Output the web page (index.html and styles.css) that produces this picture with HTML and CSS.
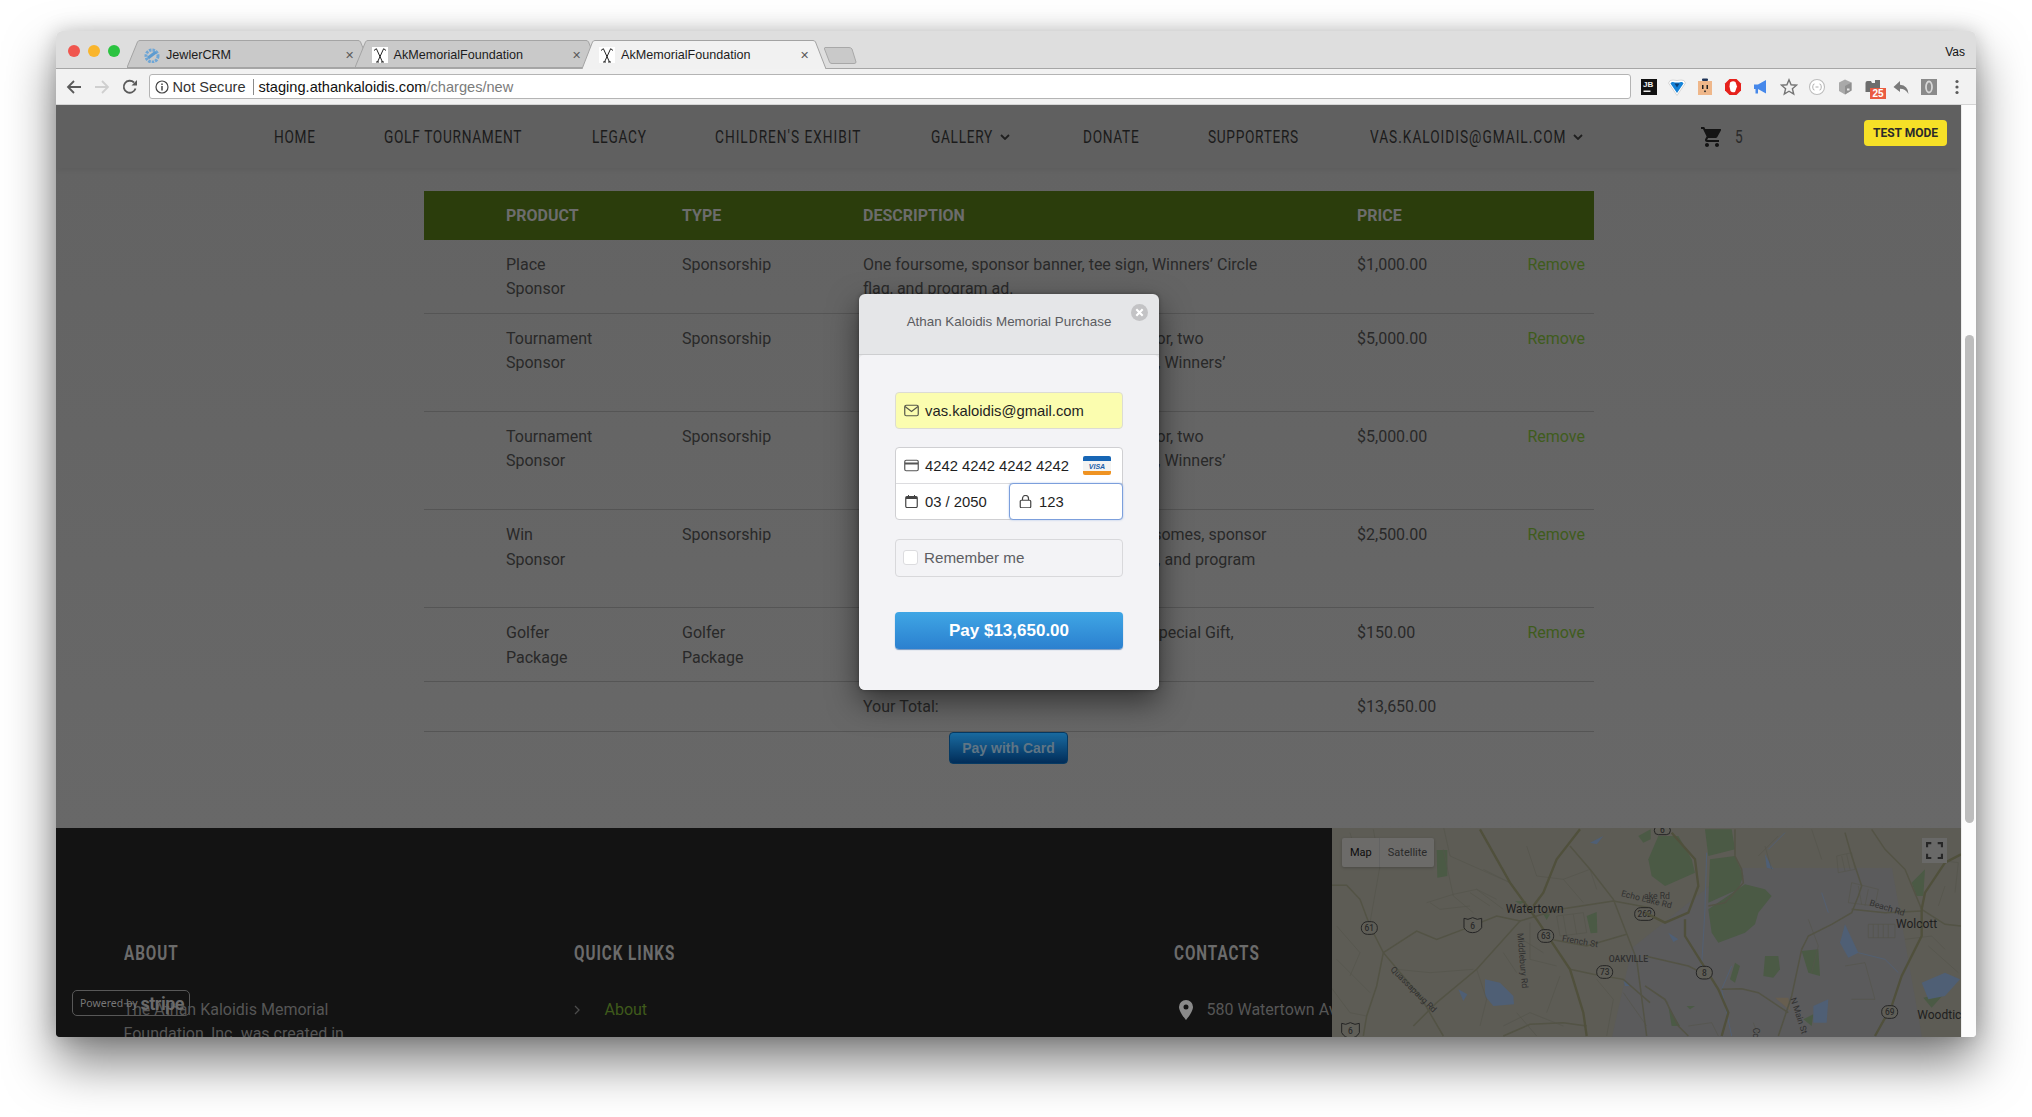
FILE: index.html
```html
<!DOCTYPE html>
<html lang="en">
<head>
<meta charset="utf-8">
<title>AkMemorialFoundation</title>
<link rel="stylesheet" href="styles.css">
</head>
<body>
<div class="window">
  <div class="titlebar">
    <div class="lights"><span class="light red"></span><span class="light yellow"></span><span class="light green"></span></div>
    <div class="tabs">
      <div class="tab">
        <svg class="tab-shape" viewBox="0 0 244 29" preserveAspectRatio="none"><path class="tab-bg" d="M0 28.5 L10.5 2 Q11.3 .5 13 .5 H231 Q232.7 .5 233.5 2 L244 28.5 Z"/></svg>
        <svg class="favicon" viewBox="0 0 16 16"><circle cx="8" cy="9" r="6" fill="none" stroke="#6ea6d6" stroke-width="3" stroke-dasharray="2.5 1"/><path d="M4 11 L12 5" stroke="#5d9bd0" stroke-width="3"/></svg>
        <span class="tab-title">JewlerCRM</span><span class="tab-x">✕</span>
      </div>
      <div class="tab">
        <svg class="tab-shape" viewBox="0 0 244 29" preserveAspectRatio="none"><path class="tab-bg" d="M0 28.5 L10.5 2 Q11.3 .5 13 .5 H231 Q232.7 .5 233.5 2 L244 28.5 Z"/></svg>
        <svg class="favicon" viewBox="0 0 16 16"><rect width="16" height="16" fill="#fff"/><path d="M4.500 2 L10.500 15 M11.500 2 L5.500 15 M2 3.500 L4.500 1.500 M14 3.500 L11.500 1.500 M4 15 H7 M9 15 H12" stroke="#222" stroke-width="1" fill="none"/></svg>
        <span class="tab-title">AkMemorialFoundation</span><span class="tab-x">✕</span>
      </div>
      <div class="tab tab-active">
        <svg class="tab-shape" viewBox="0 0 244 29" preserveAspectRatio="none"><path class="tab-bg" d="M0 29 L10.5 2 Q11.3 .5 13 .5 H231 Q232.7 .5 233.5 2 L244 29"/></svg>
        <svg class="favicon" viewBox="0 0 16 16"><rect width="16" height="16" fill="#fff"/><path d="M4.500 2 L10.500 15 M11.500 2 L5.500 15 M2 3.500 L4.500 1.500 M14 3.500 L11.500 1.500 M4 15 H7 M9 15 H12" stroke="#222" stroke-width="1" fill="none"/></svg>
        <span class="tab-title">AkMemorialFoundation</span><span class="tab-x">✕</span>
      </div>
      <svg class="newtab" viewBox="0 0 33 17"><path d="M1 .5 H25 Q27 .5 28 2 L32 15 Q32 16.500 30 16.500 H8 Q6 16.500 5.500 15 L.5 2 Q.3 .5 1 .5 Z" fill="#c9c9c9" stroke="#a8a8a8"/></svg>
    </div>
    <span class="profile">Vas</span>
  </div>

  <div class="toolbar">
    <svg class="nav-arrow" viewBox="0 0 16 16"><path d="M15 8 H2 M8 2 L2 8 L8 14" fill="none" stroke="#5a5a5a" stroke-width="1.8"/></svg>
    <svg class="nav-arrow" viewBox="0 0 16 16"><path d="M1 8 H14 M8 2 L14 8 L8 14" fill="none" stroke="#cfcfcf" stroke-width="1.8"/></svg>
    <svg class="nav-arrow" viewBox="0 0 16 16"><path d="M13.500 9.500 A6 6 0 1 1 12 3.500" fill="none" stroke="#5a5a5a" stroke-width="1.800"/><path d="M9.500 6.500 H15 V1 Z" fill="#5a5a5a"/></svg>
    <div class="omnibox">
      <svg class="info" viewBox="0 0 14 14"><circle cx="7" cy="7" r="6" fill="none" stroke="#444" stroke-width="1.2"/><path d="M7 6 V10.500 M7 3.500 V5" stroke="#444" stroke-width="1.500"/></svg>
      <span class="not-secure">Not Secure</span>
      <span class="omni-sep"></span>
      <span class="url">staging.athankaloidis.com<span class="url-path">/charges/new</span></span>
    </div>
    <div class="extensions">
      <span class="ext"><svg viewBox="0 0 18 18"><rect x="1" y="1" width="16" height="16" fill="#111"/><rect x="3.500" y="12.500" width="7" height="1.500" fill="#eee"/></svg><b class="jb">JB</b></span>
      <span class="ext"><svg viewBox="0 0 18 18"><path d="M.5 5 Q1.500 1.500 5 2 Q9 3 13 2 Q16.500 1.500 17.500 5 L9 17.500 Z" fill="#fff" stroke="#d5d5d5"/><path d="M2.500 5.500 Q3 3.500 5 4 Q9 5 13 4 Q15 3.500 15.500 5.500 L9 15 Z" fill="#1583d8"/><path d="M6.500 5.500 H11.500 L9 9.500 Z" fill="#0b3f78"/></svg></span>
      <span class="ext"><svg viewBox="0 0 18 18"><rect x="2" y="3" width="14" height="14" fill="#efb78a"/><rect x="6" y="0.500" width="6" height="2.500" rx="1" fill="#1f3558"/><rect x="6" y="7" width="1.500" height="4" fill="#222"/><rect x="10.500" y="7" width="1.500" height="4" fill="#222"/><rect x="8.200" y="12.500" width="1.600" height="1.600" fill="#222"/></svg></span>
      <span class="ext"><svg viewBox="0 0 18 18"><path d="M5.500 1 H12.500 L17 5.500 V12.500 L12.500 17 H5.500 L1 12.500 V5.500 Z" fill="#e6211c"/><path d="M6 4.500 Q9 2.500 11.500 4 L13 8.500 L11 14 Q8 15 6.500 13 L5.500 8.500 Z" fill="#fff"/></svg></span>
      <span class="ext"><svg viewBox="0 0 18 18"><path d="M2 6.500 H6 L14 2 V15.500 L6 11 V15.500 H3.500 V11 H2 Z" fill="#4688ea"/></svg></span>
      <span class="ext"><svg viewBox="0 0 18 18"><path d="M9 1.800 L11.100 6.800 L16.500 7.200 L12.400 10.700 L13.700 16 L9 13.200 L4.300 16 L5.600 10.700 L1.500 7.200 L6.900 6.800 Z" fill="none" stroke="#757575" stroke-width="1.400"/></svg></span>
      <span class="ext"><svg viewBox="0 0 18 18"><circle cx="9" cy="9" r="7.500" fill="#fff" stroke="#bdbdbd" stroke-width="1.100"/><path d="M6.500 6 Q5 6 5 7.500 V8.200 L4.300 9 L5 9.800 V10.500 Q5 12 6.500 12 M11.500 6 Q13 6 13 7.500 V8.200 L13.700 9 L13 9.800 V10.500 Q13 12 11.500 12 M7.500 9 H10.500" fill="none" stroke="#999" stroke-width=".8"/></svg></span>
      <span class="ext"><svg viewBox="0 0 18 18"><path d="M9 1.500 L15.500 4.500 V12.500 L9 16.500 L3 13 V4.500 Z" fill="#a9a9a9"/><path d="M9 8 L15.500 4.500 V12.500 L9 16.500 Z" fill="#8f8f8f"/><rect x="11" y="10.500" width="2.500" height="2" fill="#e8e8e8"/></svg></span>
      <span class="ext ext-cal"><svg viewBox="0 0 18 18"><path d="M1.500 5 Q1.500 3 3.500 3 H7 L8 5 H11 V2 H16 V14 H1.500 Z" fill="#6d6d6d"/></svg><b class="cal-badge">25</b></span>
      <span class="ext"><svg viewBox="0 0 18 18"><path d="M8 3 L1.500 9 L8 14 V10.800 Q13.500 10.800 16.500 16 Q16 7.500 8 6.800 Z" fill="#7b7b7b"/></svg></span>
      <span class="ext"><svg viewBox="0 0 18 18"><rect x="1" y="1" width="16" height="16" fill="#8a8a8a"/><ellipse cx="9" cy="9" rx="3" ry="5.500" fill="none" stroke="#d7d7d7" stroke-width="1.800"/></svg></span>
      <span class="ext"><svg viewBox="0 0 18 18"><circle cx="9" cy="3.500" r="1.600" fill="#5b5b5b"/><circle cx="9" cy="9" r="1.600" fill="#5b5b5b"/><circle cx="9" cy="14.500" r="1.600" fill="#5b5b5b"/></svg></span>
    </div>
  </div>

  <div class="viewport">
    <div class="page">
      <header class="site-header">
        <nav class="site-nav">
          <a class="nav-link w-home"><span class="nav-t">HOME</span></a>
          <a class="nav-link w-golf"><span class="nav-t">GOLF TOURNAMENT</span></a>
          <a class="nav-link w-legacy"><span class="nav-t">LEGACY</span></a>
          <a class="nav-link w-child"><span class="nav-t">CHILDREN'S EXHIBIT</span></a>
          <a class="nav-link w-gallery"><span class="nav-t">GALLERY</span><svg class="chev" viewBox="0 0 10 6"><path d="M1 1 L5 5 L9 1" fill="none" stroke="#1f1f1f" stroke-width="1.800"/></svg></a>
          <a class="nav-link w-donate"><span class="nav-t">DONATE</span></a>
          <a class="nav-link w-supp"><span class="nav-t">SUPPORTERS</span></a>
          <a class="nav-link w-mail"><span class="nav-t">VAS.KALOIDIS@GMAIL.COM</span><svg class="chev" viewBox="0 0 10 6"><path d="M1 1 L5 5 L9 1" fill="none" stroke="#1f1f1f" stroke-width="1.800"/></svg></a>
          <a class="cart">
            <svg class="cart-icon" viewBox="0 0 24 24"><path d="M7 18c-1.100 0-2 .9-2 2s.9 2 2 2 2-.9 2-2-.9-2-2-2zM1 2v2h2l3.600 7.590-1.350 2.450c-.16.28-.25.61-.25.96 0 1.100.9 2 2 2h12v-2H7.420c-.14 0-.25-.11-.25-.25l.03-.12.9-1.630h7.450c.75 0 1.410-.41 1.750-1.030l3.580-6.490A1 1 0 0 0 20 4H5.210l-.94-2H1zm16 16c-1.100 0-2 .9-2 2s.9 2 2 2 2-.9 2-2-.9-2-2-2z" fill="#141414"/></svg>
            <span class="cart-count"><span class="nav-t">5</span></span>
          </a>
        </nav>
        <span class="test-mode">TEST MODE</span>
      </header>

      <main class="content">
        <table class="cart-table">
          <colgroup><col class="c1"><col class="c2"><col class="c3"><col class="c4"><col class="c5"></colgroup>
          <thead>
            <tr><th class="first">Product</th><th>Type</th><th>Description</th><th>Price</th><th></th></tr>
          </thead>
          <tbody>
            <tr><td class="first">Place<br>Sponsor</td><td>Sponsorship</td><td>One foursome, sponsor banner, tee sign, Winners’ Circle<br>flag, and program ad.</td><td>$1,000.00</td><td class="act"><a class="remove">Remove</a></td></tr>
            <tr><td class="first">Tournament<br>Sponsor</td><td>Sponsorship</td><td>Two foursomes, major tournament sponsor, two<br>large tournament banners, eight tee signs, Winners’<br>Circle flag, and program ad.</td><td>$5,000.00</td><td class="act"><a class="remove">Remove</a></td></tr>
            <tr><td class="first">Tournament<br>Sponsor</td><td>Sponsorship</td><td>Two foursomes, major tournament sponsor, two<br>large tournament banners, eight tee signs, Winners’<br>Circle flag, and program ad.</td><td>$5,000.00</td><td class="act"><a class="remove">Remove</a></td></tr>
            <tr><td class="first">Win<br>Sponsor</td><td>Sponsorship</td><td>Ten premier Winners’ Circle Sponsor foursomes, sponsor<br>sponsor banner, tee signs, Winners’ Circle, and program<br>ad.</td><td>$2,500.00</td><td class="act"><a class="remove">Remove</a></td></tr>
            <tr><td class="first">Golfer<br>Package</td><td>Golfer<br>Package</td><td>One golfer, golf cart, lunch, dinner, and a Special Gift,<br>plus tee prizes.</td><td>$150.00</td><td class="act"><a class="remove">Remove</a></td></tr>
            <tr><td class="first"></td><td></td><td>Your Total:</td><td>$13,650.00</td><td></td></tr>
          </tbody>
        </table>
        <div class="pay-row"><button class="pay-card">Pay with Card</button></div>
      </main>

      <footer class="site-footer">
        <div class="foot-col foot-about">
          <h4 class="foot-title">ABOUT</h4>
          <p class="foot-text">The Athan Kaloidis Memorial<br>Foundation, Inc. was created in</p>
        </div>
        <div class="foot-col foot-links">
          <h4 class="foot-title">QUICK LINKS</h4>
          <p class="foot-link"><svg class="foot-chev" viewBox="0 0 6 10"><path d="M1 1 L5 5 L1 9" fill="none" stroke="#4c4c4c" stroke-width="1.300"/></svg><a class="foot-green">About</a></p>
        </div>
        <div class="foot-col foot-contacts">
          <h4 class="foot-title">CONTACTS</h4>
          <p class="foot-addr"><svg class="pin" viewBox="0 0 14 20"><path fill-rule="evenodd" d="M7 0 A7 7 0 0 1 14 7 C14 12 7 20 7 20 C7 20 0 12 0 7 A7 7 0 0 1 7 0 Z M7 4.500 A2.500 2.500 0 1 0 7 9.500 A2.500 2.500 0 1 0 7 4.500 Z" fill="#8a8a8a"/></svg><span>580 Watertown Avenue</span></p>
        </div>
        <div class="map">
          <svg class="map-svg" viewBox="0 0 629 209" preserveAspectRatio="none">
            <rect width="629" height="209" fill="#5d5c55"/>
            <path d="M400 40 H560 L590 209 H280 L300 120 Z" fill="#5b5b5c"/>
            <g transform="translate(-2,-2) scale(.33333)">
              <g class="m-green">
                <path d="M320 72 H352 V150 L322 155 Z"/><path d="M770 270 L800 258 L802 320 L782 322 Z"/><path d="M925 30 L962 10 V40 L940 50 Z"/><path d="M555 225 H590 L570 235 Z"/><path d="M640 265 H660 L650 282 Z"/>
              </g>
              <g class="m-water">
                <path d="M465 460 L510 470 L550 510 L552 535 L490 540 L465 510 Z"/><path d="M385 490 L412 505 L400 525 Z"/><path d="M780 50 L820 30 L800 55 Z"/><path d="M880 460 L905 480 L885 480 Z"/>
              </g>
              <g class="m-thin">
                <path d="M340 70 L370 210 L430 260 M290 230 L370 205 L440 190 L520 250 M420 200 L480 240 M440 190 L500 220 M300 230 L330 250 L420 240"/>
                <path d="M130 10 L150 120 L120 290 M60 20 L90 120 M20 300 L90 380 L60 450 M20 400 L120 500 M200 430 L300 440 L430 430 M0 480 L60 560 L110 570"/>
                <path d="M340 0 L360 90 L540 170 M460 130 L540 170 M590 60 L620 150 L700 160 L780 130 L800 190 M700 160 L760 230 M520 380 L560 440 M440 430 L470 520 L450 600 M520 600 L600 560 L700 600 M560 560 L620 630"/>
                <path d="M680 270 L760 260 L770 320 L690 330 Z M700 270 L710 330 M730 265 L740 325 M600 290 L600 400 L680 420 M560 330 L640 380 M800 460 L850 520 L830 630 M880 500 L950 600 M690 450 L650 560"/>
              </g>
              <g class="m-road">
                <path d="M0 178 H50 L90 220 L120 300 L160 380 L270 510 L340 630"/>
                <path d="M160 380 L260 315 L320 340 L400 310 L500 270 L570 285 L620 270 L690 250 L850 225 L960 245"/>
                <path d="M160 380 L140 480 L110 570 L100 630"/>
                <path d="M570 285 L440 430 L320 530 L250 600"/>
                <path d="M720 430 L790 445 L880 460 L960 530"/>
                <path d="M660 340 L770 360 L890 325"/>
                <path d="M720 60 L780 130 L850 220 L920 400 L950 630"/>
                <path d="M520 630 L600 595 L700 590 L770 600"/>
              </g>
              <g class="m-main">
                <path d="M450 10 L540 170 L620 280 L720 430 L760 560 L770 630"/>
                <path d="M750 10 L680 100 L640 200 L610 240"/>
              </g>
              <text class="m-city" x="527" y="260" font-size="36">Watertown</text>
              <text class="m-label" x="695" y="345" font-size="26" transform="rotate(10 695 345)">French St</text>
              <text class="m-label m-up" x="836" y="408" font-size="26">OAKVILLE</text>
              <text class="m-label" x="872" y="210" font-size="26" transform="rotate(14 872 210)">Echo Lake Rd</text>
              <text class="m-label" x="562" y="322" font-size="26" transform="rotate(85 562 322)">Middlebury Rd</text>
              <text class="m-label" x="180" y="432" font-size="26" transform="rotate(45 180 432)">Quassapaug Rd</text>
              <g class="m-shield"><rect x="94" y="287" width="48" height="38" rx="18"/><text x="118" y="315">61</text></g>
              <g class="m-shield"><path d="M402 277 L414 280 L428 275 L442 280 L455 277 L455 305 Q445 320 428 320 Q410 320 402 305 Z"/><text x="428" y="309">6</text></g>
              <g class="m-shield"><rect x="623" y="311" width="48" height="38" rx="18"/><text x="647" y="339">63</text></g>
              <g class="m-shield"><rect x="800" y="419" width="48" height="38" rx="18"/><text x="824" y="447">73</text></g>
              <g class="m-shield"><rect x="914" y="245" width="60" height="38" rx="18"/><text x="944" y="273">262</text></g>
              <g class="m-shield"><path d="M35 592 L47 595 L61 590 L75 595 L88 592 L88 620 Q80 636 61 636 Q44 636 35 620 Z"/><text x="61" y="624">6</text></g>
            </g>
            <g transform="translate(313,-2) scale(.33333)">
              <g class="m-green">
                <path d="M40 30 H100 L140 100 L150 140 L60 180 L20 150 L10 100 Z"/><path d="M180 10 H260 L270 70 L190 90 Z"/><path d="M195 100 L270 90 L295 150 L280 190 L190 230 Z"/>
                <path d="M190 250 L300 175 L360 190 L380 210 L340 260 L330 295 L300 320 L220 350 L200 320 Z"/><path d="M360 390 H400 L405 430 L385 455 L355 450 Z"/><path d="M470 375 L520 370 L525 450 L490 440 Z"/><path d="M800 170 L840 130 L835 210 L815 210 Z"/>
                <path d="M270 410 L285 420 L270 470 L255 460 Z"/><path d="M70 540 L105 600 L80 600 Z"/><path d="M125 540 H150 L135 550 Z"/><path d="M475 580 L505 565 L500 600 Z"/><path d="M835 515 L900 500 L860 545 Z"/>
              </g>
              <path d="M390 515 H430 L437 555 Z" fill="#675e4f"/>
              <g class="m-water">
                <path d="M600 295 L640 380 L610 395 L585 350 Z"/><path d="M830 470 L900 440 L945 460 L900 510 L850 520 Z"/><path d="M505 540 L550 520 L545 590 L505 590 Z"/><path d="M70 320 L100 340 L85 348 Z"/><path d="M360 85 L385 130 L365 125 Z"/>
              </g>
              <g class="m-thin">
                <path d="M575 90 L620 80 L630 130 L580 140 Z M590 90 L600 135 M605 85 L615 130 M620 170 L700 190 L690 240 L610 230 Z M640 180 L650 235 M670 190 L660 240"/>
                <path d="M670 295 H750 V335 H670 Z M685 295 V335 M700 295 V335 M715 295 V335 M730 295 V335 M780 340 L860 330 L900 370 M600 420 L660 410 L690 520 L620 520 M850 360 L940 440 M340 90 L400 30 M360 60 L380 130 M490 280 L520 360 L500 440 M500 10 L530 100"/>
                <path d="M325 590 L340 630 M130 600 L200 590 L220 630 M0 480 L70 530 M860 100 L940 110 L930 200 M880 240 L900 180"/>
              </g>
              <path class="m-thin-blue" d="M185 80 L180 250 L170 420 M370 70 L420 20 M530 200 L550 260 M640 380 L720 400 L760 440 M260 420 L230 490 L260 630"/>
              <g class="m-road">
                <path d="M190 240 L240 230 L295 170 L290 130 L270 90 L270 10"/>
                <path d="M230 490 L290 488 L340 500 L430 560"/>
                <path d="M470 370 L440 510 L400 630"/>
                <path d="M470 370 L490 330 L560 295 L620 260 L640 210 L650 180 L620 90 L600 20"/>
                <path d="M830 250 L900 295 L948 300"/>
                <path d="M620 250 L720 260 L830 255"/>
                <path d="M0 480 L60 520 L100 600 L130 630"/>
                <path d="M830 250 L780 130 L720 70 L680 10"/>
                <path d="M0 390 L130 420 L170 440"/>
              </g>
              <g class="m-main">
                <path d="M80 20 L150 100 L160 180 L130 260 L60 290 L0 260"/>
                <path d="M120 280 L120 330 L170 410 L220 490 L250 560 L230 630"/>
                <path d="M830 250 L830 330 L770 450 L740 540 L690 630"/>
                <path d="M830 250 L840 200 L900 110 L948 85"/>
              </g>
              <text class="m-label" x="-3" y="218" font-size="26">ake Rd</text>
              <text class="m-label" x="672" y="238" font-size="26" transform="rotate(17 672 238)">Beach Rd</text>
              <text class="m-label" x="436" y="518" font-size="26" transform="rotate(72 436 518)">N Main St</text>
              <text class="m-label" x="325" y="605" font-size="26" transform="rotate(90 325 605)">Co</text>
              <text class="m-city" x="753" y="305" font-size="36">Wolcott</text>
              <text class="m-city" x="817" y="578" font-size="36">Woodtic</text>
              <g class="m-shield"><rect x="154" y="421" width="48" height="38" rx="18"/><text x="178" y="449">8</text></g>
              <g class="m-shield"><rect x="710" y="539" width="48" height="38" rx="18"/><text x="734" y="567">69</text></g>
              <g class="m-shield"><rect x="28" y="0" width="48" height="26" rx="12"/><text x="52" y="20">6</text></g>
            </g>
          </svg>
          <div class="map-type"><span class="map-btn map-on">Map</span><span class="map-btn">Satellite</span></div>
          <div class="map-full"><svg viewBox="0 0 16 16"><path d="M1 5 V1 H5 M11 1 H15 V5 M15 11 V15 H11 M5 15 H1 V11" fill="none" stroke="#262626" stroke-width="2"/></svg></div>
        </div>
      </footer>

      <div class="stripe-badge"><span class="powered">Powered by</span><b class="stripe-word">stripe</b></div>

      <div class="modal">
        <div class="modal-head">
          <span class="modal-title">Athan Kaloidis Memorial Purchase</span>
          <span class="modal-close"><svg viewBox="0 0 16 16"><circle cx="8" cy="8" r="8" fill="#c3c3c5"/><path d="M5 5 L11 11 M11 5 L5 11" stroke="#fff" stroke-width="2"/></svg></span>
        </div>
        <div class="modal-body">
          <div class="field field-email">
            <svg class="f-icon" viewBox="0 0 15 13"><rect x=".75" y="1.250" width="13.500" height="10.500" rx="1.500" fill="none" stroke="#55574a" stroke-width="1.200"/><path d="M1 2.500 L7.500 7.500 L14 2.500" fill="none" stroke="#55574a" stroke-width="1.200"/></svg>
            <span class="f-val">vas.kaloidis@gmail.com</span>
          </div>
          <div class="field-group">
            <div class="field-line">
              <svg class="f-icon" viewBox="0 0 15 13"><rect x=".75" y="1.250" width="13.500" height="10.500" rx="1.500" fill="none" stroke="#555" stroke-width="1.200"/><rect x="1" y="3.500" width="13" height="2" fill="#555"/></svg>
              <span class="f-val">4242 4242 4242 4242</span>
              <svg class="visa" viewBox="0 0 28 19"><rect width="28" height="19" rx="2" fill="#fff"/><path d="M0 5 V2 Q0 0 2 0 H26 Q28 0 28 2 V5 Z" fill="#1766b5"/><path d="M0 15 H28 V17 Q28 19 26 19 H2 Q0 19 0 17 Z" fill="#ef9322"/><rect y="5" width="28" height="10" fill="#f4f4f2"/><text class="visa-t" x="14" y="13.200">VISA</text></svg>
            </div>
            <div class="field-row">
              <div class="field-cell">
                <svg class="f-icon" viewBox="0 0 15 13"><rect x="1.750" y="1.500" width="11.500" height="11" rx="1.200" fill="none" stroke="#444" stroke-width="1.200"/><rect x="2" y="2" width="11" height="2" fill="#444"/><path d="M4.500 0 V2 M10.500 0 V2" stroke="#444"/></svg>
                <span class="f-val">03 / 2050</span>
              </div>
              <div class="field-cell field-focus">
                <svg class="f-icon" viewBox="0 0 15 13"><rect x="2.250" y="5.250" width="10.500" height="7.500" rx="1.200" fill="none" stroke="#444" stroke-width="1.200"/><path d="M4.500 5 V3.500 A3 3 0 0 1 10.500 3.500 V5" fill="none" stroke="#444" stroke-width="1.200"/></svg>
                <span class="f-val">123</span>
              </div>
            </div>
          </div>
          <div class="remember"><span class="check"></span><span class="remember-t">Remember me</span></div>
          <button class="pay-btn">Pay $13,650.00</button>
        </div>
      </div>
    </div>
    <div class="scrollbar"><span class="thumb"></span></div>
  </div>
</div>
</body>
</html>
```
FILE: styles.css
```css
* { box-sizing: border-box; }
html, body { margin: 0; height: 1117px; overflow: hidden; background: #fff; }
body { padding: 31px 56px 80px; font-family: "Liberation Sans", Arial, sans-serif; }

.window { width: 1920px; height: 1006px; display: flex; flex-direction: column; border-radius: 6px 6px 4px 4px; box-shadow: 0 26px 50px 0 rgba(0,0,0,.5), 0 0 20px rgba(0,0,0,.18); overflow: hidden; background: #fff; }

/* browser chrome */
.titlebar { height: 38px; flex: none; display: flex; position: relative; background: #dedede; border-bottom: 1px solid #a6a6a6; }
.lights { display: flex; gap: 8px; padding: 14px 0 0 12px; width: 71px; flex: none; }
.light { width: 12px; height: 12px; border-radius: 50%; }
.red { background: #f0564f; }
.yellow { background: #f9b52c; }
.green { background: #2bc340; }
.tabs { display: flex; padding-top: 9px; height: 38px; flex: 1; }
.tab { width: 244px; height: 28px; margin-right: -16.500px; position: relative; display: flex; align-items: center; padding: 2px 0 0 17px; font-size: 12.600px; color: #1c1c1c; flex: none; }
.tab-shape { position: absolute; inset: 0; width: 100%; height: 100%; }
.tab-bg { fill: #c9c9c9; stroke: #a3a3a3; stroke-width: 1; vector-effect: non-scaling-stroke; }
.tab-active { height: 29px; z-index: 2; padding-top: 1px; }
.tab-active .tab-bg { fill: #f1f1f1; }
.favicon { width: 16px; height: 16px; position: relative; flex: none; }
.tab-title { position: relative; margin-left: 6px; flex: 1; white-space: nowrap; }
.tab-x { position: relative; width: 12px; margin-right: 16px; font-size: 11px; color: #5a5a5a; text-align: center; }
.newtab { width: 33px; height: 17px; margin: 7px 0 0 14px; flex: none; }
.profile { position: absolute; right: 11px; top: 14px; font-size: 12px; color: #111; }

.toolbar { height: 36px; flex: none; display: flex; align-items: center; background: #f2f2f2; padding: 0 4px 0 10px; border-bottom: 1px solid #d4d4d4; }
.nav-arrow { width: 16px; height: 16px; margin-right: 12px; flex: none; }
.omnibox { width: 1482px; height: 25px; margin-left: -1.500px; flex: none; background: #fff; border: 1px solid #b4b4b4; border-radius: 3px; display: flex; align-items: center; padding-left: 5px; font-size: 14.600px; color: #111; }
.info { width: 14px; height: 14px; flex: none; }
.not-secure { margin-left: 4px; color: #333; white-space: nowrap; }
.omni-sep { width: 1px; height: 16px; background: #8a8a8a; margin: 0 5px 0 7px; }
.url { white-space: nowrap; }
.url-path { color: #7b7b7b; }
.extensions { display: flex; margin-left: 4.500px; }
.ext { width: 28px; height: 28px; display: flex; align-items: center; justify-content: center; position: relative; flex: none; }
.ext svg { width: 18px; height: 18px; }
.jb { position: absolute; left: 8px; top: 7px; font-size: 8px; line-height: 9px; color: #eee; }
.cal-badge { position: absolute; left: 11px; top: 15px; width: 16px; height: 11px; background: #ea5c42; color: #fff; font-size: 10px; line-height: 11px; text-align: center; }

/* viewport */
.viewport { flex: 1; display: flex; min-height: 0; }
.page { flex: 1; min-width: 0; position: relative; overflow: hidden; display: flex; flex-direction: column; background: #646464; }
.scrollbar { width: 15px; flex: none; background: #fcfcfc; border-left: 1px solid #ececec; padding: 230px 0 0 3px; }
.thumb { display: block; width: 9px; height: 488px; border-radius: 5px; background: #bdbdbd; }

/* site header */
.site-header { height: 63px; flex: none; position: relative; background: #606060; box-shadow: 0 1px 6px rgba(0,0,0,.08); }
.site-nav { display: flex; align-items: center; height: 63px; padding: 0 0 0 218px; gap: 70px; }
.nav-link { position: relative; display: block; height: 24px; flex: none; color: #1b1b1b; white-space: nowrap; }
.nav-t { display: inline-block; font: 18px/24px "Roboto", sans-serif; letter-spacing: .9px; transform: scaleX(.76); transform-origin: left center; }
.w-child .nav-t, .w-mail .nav-t { letter-spacing: 1.300px; }
.w-home { width: 40px; }
.w-golf { width: 137.500px; }
.w-legacy { width: 53.500px; }
.w-child { width: 146px; }
.w-gallery { width: 81.500px; }
.w-donate { width: 55px; }
.w-supp { width: 92.500px; }
.w-mail { width: 213px; }
.chev { position: absolute; right: 0; top: 9px; width: 10px; height: 6px; }
.w-gallery .chev { right: 3px; }
.cart { display: flex; align-items: center; margin-left: 47px; }
.cart-icon { width: 24px; height: 24px; flex: none; }
.cart-count { margin-left: 11px; color: #2a2a2a; }
.test-mode { position: absolute; left: 1808px; top: 15px; width: 83px; height: 26px; border-radius: 4px; background: #f6e027; color: #2b2b2b; font: bold 12px/26px "Roboto", sans-serif; text-align: center; }

/* content */
.content { height: 660px; flex: none; padding: 23px 0 0 368px; background: linear-gradient(#636363, #686868); }
.cart-table { width: 1170px; table-layout: fixed; border-collapse: collapse; font: 16px/24.4px "Roboto", sans-serif; color: #292929; }
.c1 { width: 250px; }
.c2 { width: 181px; }
.c3 { width: 494px; }
.c4 { width: 170px; }
.cart-table th { height: 49px; padding: 2px 8px 0; background: #2b3d0c; color: #6c6c6c; font-weight: 700; text-align: left; text-transform: uppercase; }
.cart-table td { padding: 13px 8px 11px; vertical-align: top; border-bottom: 1px solid #555; }
.cart-table .first { padding-left: 82px; }
.cart-table .act { text-align: right; padding-right: 9px; }
.remove { color: #3f5c1c; }
.pay-row { width: 1169px; display: flex; justify-content: center; }
.pay-card { width: 119px; height: 32px; padding: 0; border: 1px solid #063a63; border-radius: 4px; background: linear-gradient(#1a6ba0, #012d59); color: #5f7585; font: bold 14px "Liberation Sans", sans-serif; }

/* footer */
.site-footer { flex: 1; min-height: 0; display: flex; background: #131313; overflow: hidden; }
.foot-col { flex: none; padding-top: 113px; }
.foot-about { width: 517.500px; padding-left: 67.500px; }
.foot-links { width: 600px; }
.foot-contacts { width: 158.500px; overflow: hidden; }
.foot-title { margin: 0; font: bold 21px/24px "Roboto", sans-serif; letter-spacing: 1.300px; color: #6b6b6b; white-space: nowrap; transform: scaleX(.725); transform-origin: left center; }
.foot-text { margin: 33px 0 0; font: 16px/24px "Roboto", sans-serif; color: #565656; white-space: nowrap; }
.foot-link { margin: 33px 0 0; display: flex; align-items: center; font: 16px/24px "Roboto", sans-serif; }
.foot-chev { width: 6px; height: 10px; margin-right: 25px; }
.foot-green { color: #3f5a1b; }
.foot-addr { margin: 33px 0 0; display: flex; align-items: center; font: 16px/24px "Roboto", sans-serif; color: #565656; white-space: nowrap; }
.pin { width: 14px; height: 20px; margin: 0 14px 0 5px; flex: none; }
.map { width: 629px; flex: none; position: relative; overflow: hidden; }
.map-svg { display: block; width: 629px; height: 209px; }
.m-green path { fill: #4b5a45; }
.m-water path { fill: #4f5f75; }
.m-thin path { fill: none; stroke: #54544b; stroke-width: 2; }
.m-thin-blue { fill: none; stroke: #525f72; stroke-width: 3; }
.m-road path { fill: none; stroke: #535345; stroke-width: 4.500; }
.m-main path { fill: none; stroke: #50503c; stroke-width: 7; }
.m-city { font-family: "Roboto", sans-serif; fill: #1e1e1e; }
.m-label { font-family: "Roboto", sans-serif; fill: #303030; }
.m-up { font-weight: 500; }
.m-shield rect, .m-shield path { fill: #5f5e57; stroke: #242424; stroke-width: 3; }
.m-shield text { font: 500 25px "Roboto", sans-serif; fill: #2a2a2a; text-anchor: middle; }
.map-type { position: absolute; left: 10px; top: 10px; height: 29px; display: flex; background: #6c6b69; border-radius: 2px; box-shadow: 0 1px 3px rgba(0,0,0,.2); font: 11px/29px "Roboto", sans-serif; color: #2a2a2a; }
.map-btn { padding: 0 7px 0 8px; }
.map-on { color: #0c0c0c; border-right: 1px solid #636363; }
.map-full { position: absolute; right: 14px; top: 10px; width: 25px; height: 25px; background: #696968; padding: 4px; }
.map-full svg { display: block; width: 17px; height: 17px; }

.stripe-badge { position: absolute; left: 16px; bottom: 21px; width: 118px; height: 26px; border: 1px solid #585858; border-radius: 5px; display: flex; align-items: center; padding-left: 7px; color: #787878; }
.powered { font: 10.500px "Noto Sans", sans-serif; white-space: nowrap; }
.stripe-word { margin-left: 3px; font: bold 18px "Roboto", sans-serif; letter-spacing: -.5px; color: #6a6a6a; }

/* modal */
.modal { position: absolute; left: 803px; top: 189px; width: 300px; height: 396px; border-radius: 6px; background: #e5e6e8; box-shadow: 0 12px 30px rgba(0,0,0,.5), 0 0 4px rgba(0,0,0,.3); display: flex; flex-direction: column; }
.modal-head { height: 61px; flex: none; position: relative; text-align: center; padding-top: 19px; font-size: 13.400px; line-height: 18px; color: #5a5b60; border-bottom: 1px solid #cdced0; }
.modal-close { position: absolute; right: 11px; top: 10px; width: 17px; height: 17px; }
.modal-close svg { display: block; width: 17px; height: 17px; }
.modal-body { flex: 1; border-radius: 5px 5px 6px 6px; background: #f3f3f6; padding: 37px 36px 0; }
.field { height: 37px; border: 1px solid #dcdcd4; border-radius: 4px; display: flex; align-items: center; padding-left: 8px; }
.field-email { background: #fbfdaf; }
.f-icon { width: 15px; height: 13px; flex: none; }
.f-val { margin-left: 6px; font-size: 14.800px; color: #1f1f1f; white-space: nowrap; }
.field-group { margin-top: 18px; height: 73px; border: 1px solid #cfcfd2; border-radius: 4px; background: #fff; }
.field-line { height: 36px; display: flex; align-items: center; padding-left: 8px; border-bottom: 1px solid #dcdcdf; }
.visa { width: 28px; height: 19px; margin-left: auto; margin-right: 11px; flex: none; }
.visa-t { font: italic bold 7px "Liberation Sans", sans-serif; fill: #1a5ea8; text-anchor: middle; }
.field-row { display: flex; height: 35px; }
.field-cell { width: 113px; display: flex; align-items: center; padding-left: 8px; }
.field-focus { width: 114px; margin: -1px -1px -1px 0; height: 37px; border: 1.500px solid #7c9fdc; border-radius: 4px; background: #fff; box-shadow: 0 0 2px rgba(90,140,220,.5); }
.remember { margin-top: 19px; height: 38px; border: 1px solid #d8d8db; border-radius: 4px; display: flex; align-items: center; padding: 0 0 1px 7px; }
.check { width: 15px; height: 15px; background: #fff; border: 1px solid #dcdcdf; border-radius: 3px; flex: none; }
.remember-t { margin-left: 6px; font-size: 15.200px; color: #5d5e63; }
.pay-btn { display: block; width: 100%; height: 37px; margin-top: 35px; padding: 0; border: 0; border-radius: 4px; background: linear-gradient(#3fa6e5, #2b80cf); box-shadow: 0 1px 1px rgba(30,90,160,.6); color: #fff; font: bold 17px "Liberation Sans", sans-serif; }
```
